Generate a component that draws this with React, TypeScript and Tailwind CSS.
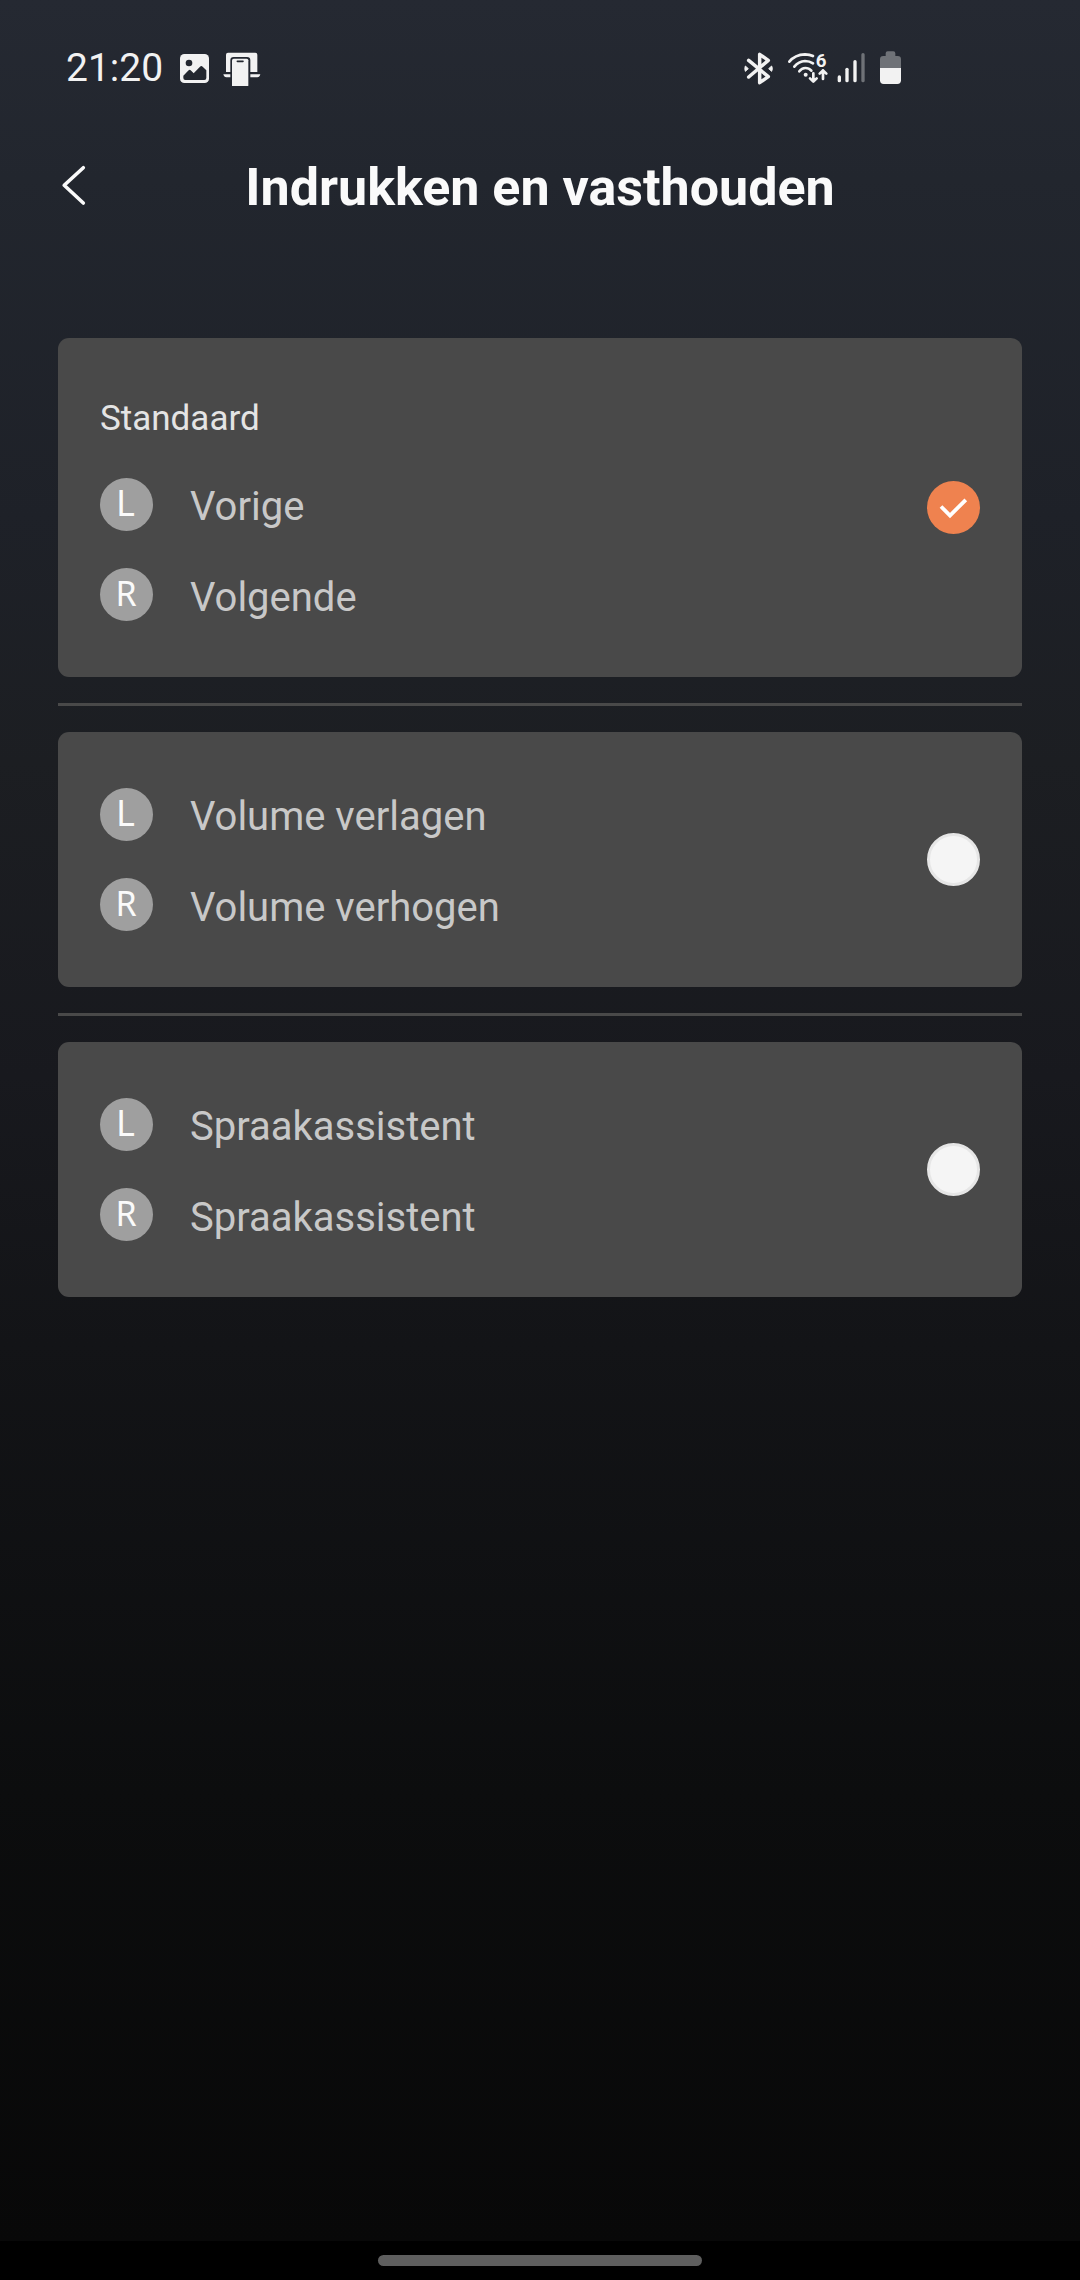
import type { ReactNode } from 'react'

function PictureIcon() {
  return (
    <svg className="h-[30px] w-[30px]" viewBox="0 0 90 90" fill="none">
      <rect x="0" y="3" width="87" height="87" rx="13" fill="#f2f2f2" />
      <circle cx="27" cy="30" r="10" fill="#23272f" />
      <path
        d="M10 68 L26 52 Q29 49 32 52 L41 61 L60 41 Q64 37 68 41 L79 52 V75 Q79 81 73 81 H16 Q10 81 10 75 Z"
        fill="#23272f"
      />
    </svg>
  )
}

function DevicesIcon() {
  return (
    <svg className="h-[36px] w-[38px]" viewBox="0 -6 114 108" fill="none">
      <path
        d="M9 60 V8 Q9 2 15 2 H97 Q103 2 103 8 V60 H82 V25 Q82 15 72 15 H32 Q22 15 22 25 V60 Z"
        fill="#f2f2f2"
      />
      <path d="M1 67 H22 V76 H10 Q3 76 1 67 Z M82 67 H112 Q110 76 103 76 H82 Z" fill="#f2f2f2" />
      <path
        d="M27 105 V25 Q27 20 32 20 H71 Q76 20 76 25 V100 Q76 105 71 105 Z"
        fill="#f2f2f2"
      />
      <path d="M43 28 H60" stroke="#23272f" strokeWidth="5" strokeLinecap="round" />
    </svg>
  )
}

function BluetoothIcon() {
  return (
    <svg className="h-[34px] w-[30px]" viewBox="0 0 90 102" fill="none">
      <path
        d="M14 28 L73 77 L47 95 V10 L73 28 L14 78"
        stroke="#f2f2f2"
        strokeWidth="10.5"
        strokeLinejoin="round"
        strokeLinecap="round"
      />
      <path
        d="M4 45 L13 53 L4 61 Q1 53 4 45 Z M83 45 L74 53 L83 61 Q87 53 83 45 Z"
        fill="#f2f2f2"
        stroke="#f2f2f2"
        strokeWidth="3"
        strokeLinejoin="round"
      />
    </svg>
  )
}

function WifiIcon() {
  return (
    <svg className="h-[34px] w-[42px] overflow-visible" viewBox="0 0 126 102" fill="none">
      <g stroke="#f2f2f2" strokeWidth="8" strokeLinecap="round">
        <path d="M7 32 Q24 11 54 10 Q68 10 78 15" />
        <path d="M22 47 Q35 31 54 30 Q68 30 78 37" />
        <path d="M37 61 Q44 51 55 51 Q66 51 73 59" />
      </g>
      <circle cx="56" cy="71" r="6" fill="#f2f2f2" />
      <g stroke="#f2f2f2" strokeWidth="8" strokeLinecap="round" strokeLinejoin="round">
        <path d="M79 67 V91 M69 82 L79 92 L89 82" />
        <path d="M108 84 V58 M98 68 L108 58 L118 68" />
      </g>
      <text x="86" y="47" fontFamily="Roboto, sans-serif" fontWeight="700" fontSize="56" fill="#f2f2f2">
        6
      </text>
    </svg>
  )
}

function SignalIcon() {
  return (
    <svg className="h-[34px] w-[29px]" viewBox="0 0 87 102" fill="none">
      <g strokeWidth="10" strokeLinecap="round">
        <path d="M7 78 V89" stroke="#f2f2f2" />
        <path d="M30 55 V89" stroke="#f2f2f2" />
        <path d="M54 32 V89" stroke="#f2f2f2" />
        <path d="M78 11 V89" stroke="#6f7277" />
      </g>
    </svg>
  )
}

function BatteryIcon() {
  return (
    <svg className="h-[34px] w-[22px]" viewBox="0 0 66 102" fill="none">
      <path
        d="M0 52 V25 Q0 15 10 15 H17 V7 Q17 1 23 1 H40 Q46 1 46 7 V15 H53 Q63 15 63 25 V52 Z"
        fill="#6f7277"
      />
      <path d="M0 51 H63 V88 Q63 99 52 99 H11 Q0 99 0 88 Z" fill="#f2f2f2" />
    </svg>
  )
}

function StatusBar() {
  return (
    <div className="flex h-[136px] shrink-0 items-center pl-[66px]">
      <span className="w-[114px] text-[39px] leading-[46px] text-[#f2f2f2]">21:20</span>
      <PictureIcon />
      <span className="ml-[13px]">
        <DevicesIcon />
      </span>
      <div className="ml-[483px] flex items-center">
        <BluetoothIcon />
        <span className="ml-[13px]">
          <WifiIcon />
        </span>
        <span className="ml-[8px]">
          <SignalIcon />
        </span>
        <span className="ml-[14px]">
          <BatteryIcon />
        </span>
      </div>
    </div>
  )
}

function Header() {
  return (
    <header className="grid h-[100px] shrink-0 grid-cols-[120px_1fr_120px] items-center">
      <button aria-label="Terug" className="pb-[1px] pl-[60px]">
        <svg className="h-[42px] w-[28px]" viewBox="0 0 28 42" fill="none">
          <path
            d="M23.3 2.7 L4.2 20.3 L23.3 38"
            stroke="#fafafa"
            strokeWidth="3.6"
            strokeLinecap="round"
            strokeLinejoin="round"
          />
        </svg>
      </button>
      <h1 className="pt-[3px] text-center text-[52px] leading-[60px] font-bold text-[#fafafa]">
        Indrukken en vasthouden
      </h1>
    </header>
  )
}

function LeftBadge() {
  return (
    <span className="flex size-[53px] shrink-0 justify-center rounded-full bg-[#9f9f9f] pr-[2px] font-['Noto_Sans',sans-serif] text-[36px] leading-[50px] text-[#fafafa]">
      L
    </span>
  )
}

function RightBadge() {
  return (
    <span className="flex size-[53px] shrink-0 justify-center rounded-full bg-[#9f9f9f] pr-[1px] font-['Noto_Sans',sans-serif] text-[34px] leading-[51px] text-[#fafafa]">
      R
    </span>
  )
}

function Label({ children }: { children: ReactNode }) {
  return (
    <span className="ml-[37px] text-[40px] leading-[53px] whitespace-nowrap text-[#c8c8c8]">
      {children}
    </span>
  )
}

function Radio({ selected }: { selected: boolean }) {
  if (!selected) {
    return <span className="size-[53px] rounded-full border-[3px] border-[#e6e6e6] bg-[#f5f5f5]" />
  }
  return (
    <span className="size-[53px] rounded-full bg-[#ef824f]">
      <svg className="size-[53px]" viewBox="0 0 53 53" fill="none">
        <path d="M14 25.5 L23 34.5 L38.8 18.8" stroke="#ffffff" strokeWidth="3.8" />
      </svg>
    </span>
  )
}

type OptionProps = { title?: string; left: string; right: string; selected?: boolean }

function Option({ title, left, right, selected = false }: OptionProps) {
  return (
    <section className="flex items-center justify-between rounded-[11px] bg-[#494949] px-[42px] py-[56px]">
      <div>
        {title && (
          <h2 className="h-[84px] text-[35px] leading-[50px] text-[#e4e4e4]">{title}</h2>
        )}
        <div className="flex h-[53px]">
          <LeftBadge />
          <div className="pt-[2px]">
            <Label>{left}</Label>
          </div>
        </div>
        <div className="mt-[37px] flex h-[53px]">
          <RightBadge />
          <div className="pt-[3px]">
            <Label>{right}</Label>
          </div>
        </div>
      </div>
      <Radio selected={selected} />
    </section>
  )
}

function Divider() {
  return <hr className="my-[26px] h-[3px] border-0 bg-[#494949]" />
}

export default function App() {
  return (
    <div className="flex h-[2280px] w-[1080px] flex-col overflow-hidden bg-black font-[Roboto,sans-serif]">
      <div className="flex h-[2241px] flex-col bg-[linear-gradient(180deg,#252932_0%,#22262e_8%,#1e2128_23%,#1c1e22_34%,#18191e_48%,#131417_60%,#0c0d0e_80%,#080808_100%)]">
        <StatusBar />
        <Header />
        <main className="px-[58px] pt-[102px]">
          <Option title="Standaard" left="Vorige" right="Volgende" selected />
          <Divider />
          <Option left="Volume verlagen" right="Volume verhogen" />
          <Divider />
          <Option left="Spraakassistent" right="Spraakassistent" />
        </main>
      </div>
      <div className="flex flex-1 justify-center pt-[14px]">
        <span className="h-[11px] w-[324px] rounded-full bg-[#5e5e5e]" />
      </div>
    </div>
  )
}
